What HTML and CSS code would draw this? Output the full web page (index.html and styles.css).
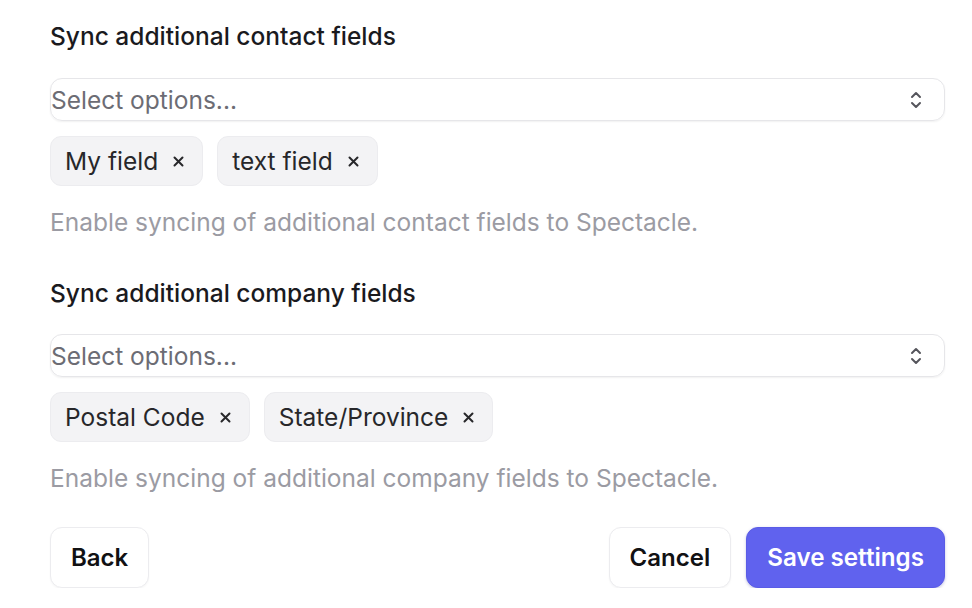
FILE: index.html
```html
<!DOCTYPE html>
<html lang="en">
<head>
<meta charset="utf-8">
<title>Sync settings</title>
<link rel="stylesheet" href="styles.css">
</head>
<body>
<main class="page">
  <section class="field">
    <h2 class="label">Sync additional contact fields</h2>
    <div class="select">
      <span class="placeholder">Select options...</span>
      <svg class="chevrons" width="12" height="20" viewBox="0 0 12 20" aria-hidden="true">
        <path d="M2 7 L6 3 L10 7" fill="none" stroke="#55555c" stroke-width="2" stroke-linecap="round" stroke-linejoin="round"/>
        <path d="M2 13 L6 17 L10 13" fill="none" stroke="#55555c" stroke-width="2" stroke-linecap="round" stroke-linejoin="round"/>
      </svg>
    </div>
    <div class="chips">
      <span class="chip">My field<svg class="x" width="11" height="11" viewBox="0 0 11 11"><path d="M1.5 1.5 L9.5 9.5 M9.5 1.5 L1.5 9.5" stroke="#27272a" stroke-width="2" stroke-linecap="round"/></svg></span>
      <span class="chip">text field<svg class="x" width="11" height="11" viewBox="0 0 11 11"><path d="M1.5 1.5 L9.5 9.5 M9.5 1.5 L1.5 9.5" stroke="#27272a" stroke-width="2" stroke-linecap="round"/></svg></span>
    </div>
    <p class="help">Enable syncing of additional contact fields to Spectacle.</p>
  </section>
  <section class="field second">
    <h2 class="label">Sync additional company fields</h2>
    <div class="select">
      <span class="placeholder">Select options...</span>
      <svg class="chevrons" width="12" height="20" viewBox="0 0 12 20" aria-hidden="true">
        <path d="M2 7 L6 3 L10 7" fill="none" stroke="#55555c" stroke-width="2" stroke-linecap="round" stroke-linejoin="round"/>
        <path d="M2 13 L6 17 L10 13" fill="none" stroke="#55555c" stroke-width="2" stroke-linecap="round" stroke-linejoin="round"/>
      </svg>
    </div>
    <div class="chips">
      <span class="chip">Postal Code<svg class="x" width="11" height="11" viewBox="0 0 11 11"><path d="M1.5 1.5 L9.5 9.5 M9.5 1.5 L1.5 9.5" stroke="#27272a" stroke-width="2" stroke-linecap="round"/></svg></span>
      <span class="chip">State/Province<svg class="x" width="11" height="11" viewBox="0 0 11 11"><path d="M1.5 1.5 L9.5 9.5 M9.5 1.5 L1.5 9.5" stroke="#27272a" stroke-width="2" stroke-linecap="round"/></svg></span>
    </div>
    <p class="help">Enable syncing of additional company fields to Spectacle.</p>
  </section>
  <div class="actions">
    <button class="btn">Back</button>
    <div class="right">
      <button class="btn">Cancel</button>
      <button class="btn primary">Save settings</button>
    </div>
  </div>
</main>
</body>
</html>
```

FILE: styles.css
```css
* { box-sizing: border-box; }
html, body { margin: 0; background: #ffffff; }
body {
  font-family: Inter, "Noto Sans", "Liberation Sans", sans-serif;
  color: #18181b;
}
.page {
  padding: 21px 27px 0 50px;
}
.label {
  margin: 0;
  font-size: 24.5px;
  line-height: 30px;
  font-weight: 500;
  color: #1a1a1e;
}
.select {
  margin-top: 27px;
  height: 43px;
  border: 1px solid #e6e6e9;
  border-radius: 12px;
  box-shadow: 0 1px 2px rgba(0,0,0,0.06);
  display: flex;
  align-items: center;
  justify-content: space-between;
  padding: 0 22px 0 0;
}
.placeholder {
  font-size: 24.5px;
  color: #6c6c74;
  margin-left: 0;
}
.chevrons { display: block; }
.chips {
  margin-top: 15px;
  display: flex;
  gap: 14px;
}
.chip {
  height: 50px;
  display: inline-flex;
  align-items: center;
  gap: 15px;
  padding: 0 18px 0 14px;
  background: #f3f3f5;
  border: 1px solid #ececef;
  border-radius: 11px;
  font-size: 24.5px;
  color: #27272a;
}
.x { display: block; }
.help {
  margin: 21px 0 0;
  font-size: 24.5px;
  line-height: 30px;
  color: #9b9ba3;
}
.second { margin-top: 41px; }
.second .select { margin-top: 26px; }
.actions {
  margin-top: 34px;
  display: flex;
  justify-content: space-between;
}
.right { display: flex; gap: 15px; }
.btn {
  height: 61px;
  padding: 0 20px;
  border: 1px solid #ececef;
  border-radius: 12px;
  background: #ffffff;
  font-family: Inter, "Noto Sans", "Liberation Sans", sans-serif;
  font-size: 24px;
  font-weight: 600;
  color: #111113;
  box-shadow: 0 1px 2px rgba(0,0,0,0.04);
}
.btn.primary {
  font-size: 24.2px;
  background: #6062ee;
  border-color: #5a5ce6;
  color: #ffffff;
  box-shadow: 0 1px 3px rgba(60,60,160,0.3);
}
```
